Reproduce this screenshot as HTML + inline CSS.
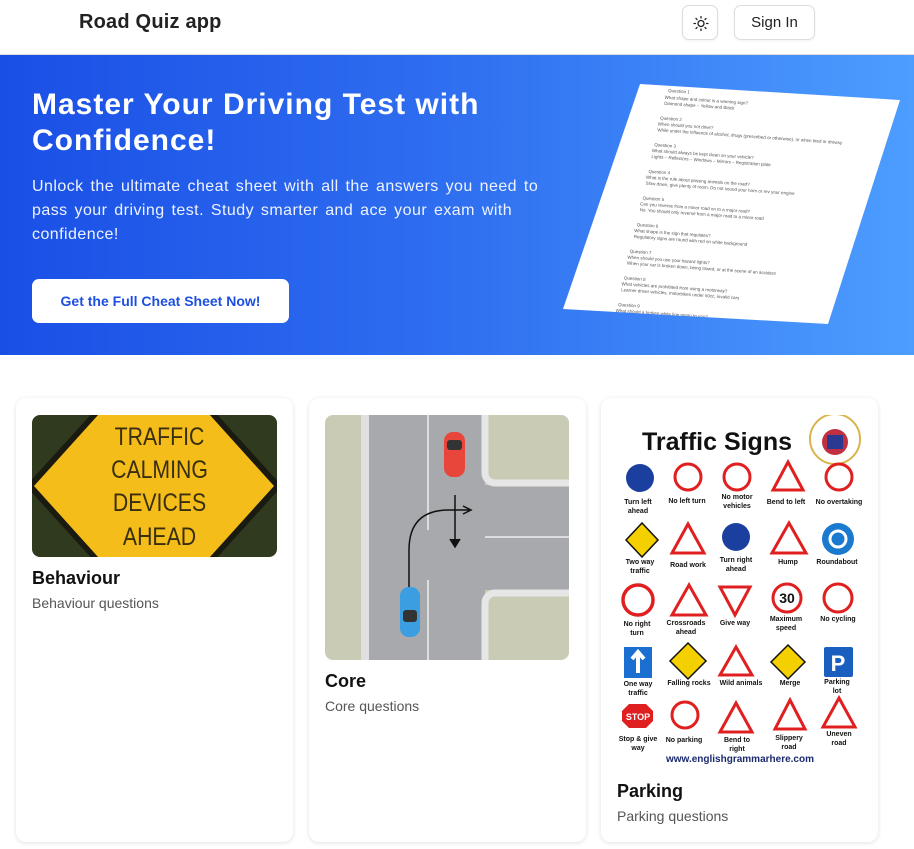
<!DOCTYPE html>
<html><head><meta charset="utf-8"><style>
*{margin:0;padding:0;box-sizing:border-box}
body{width:914px;height:849px;overflow:hidden;background:#fff;font-family:"Liberation Sans",sans-serif;position:relative}
.hdr{position:absolute;left:0;top:0;width:914px;height:55px;border-bottom:1px solid #ddd;background:#fff}
.logo{position:absolute;left:79px;top:11px;font-size:20px;font-weight:bold;color:#222;letter-spacing:0.2px}
.btn{position:absolute;border:1px solid #ddd;border-radius:7px;background:#fff;box-shadow:0 1px 2px rgba(0,0,0,.06)}
.hero{position:absolute;left:0;top:55px;width:914px;height:300px;background:linear-gradient(90deg,#1a4fe6 0%,#2f6ff0 50%,#4d9dff 100%)}
h1{position:absolute;left:32px;top:87px;color:#fff;font-size:30px;line-height:36px;font-weight:bold;letter-spacing:1px;white-space:nowrap}
.sub{position:absolute;left:32px;top:175px;white-space:nowrap;color:#eef3ff;font-size:16px;line-height:24px;letter-spacing:0.45px;word-spacing:2px}
.cta{position:absolute;left:32px;top:279px;width:257px;height:44px;background:#fff;border-radius:7px;color:#1d4fe0;font-weight:bold;font-size:14px;text-align:center;line-height:44px}
.card{position:absolute;top:398px;width:277px;height:444px;background:#fff;border-radius:10px;box-shadow:0 1px 5px rgba(0,0,0,.12)}
.t{position:absolute;font-size:18px;font-weight:bold;color:#111}
.s{position:absolute;font-size:14px;color:#555}
</style></head><body>
<div class="hdr">
<div class="logo">Road Quiz app</div>
<div class="btn" style="left:682px;top:5px;width:36px;height:35px">
<svg width="36" height="35" viewBox="0 0 36 35"><g stroke="#222" stroke-width="1.3" fill="none" stroke-linecap="round"><circle cx="18" cy="17.5" r="3"/><path d="M18 10.5v1.5M18 23v1.5M11 17.5h1.5M23.5 17.5h1.5M13 12.5l1 1M22 21.5l1 1M13 22.5l1-1M22 13.5l1-1"/></g></svg></div>
<div class="btn" style="left:734px;top:5px;width:81px;height:35px;font-size:15px;color:#222;text-align:center;line-height:33px">Sign In</div>
</div>
<div class="hero"></div>
<h1>Master Your Driving Test with<br>Confidence!</h1>
<div class="sub">Unlock the ultimate cheat sheet with all the answers you need to<br>pass your driving test. Study smarter and ace your exam with<br>confidence!</div>
<div class="cta">Get the Full Cheat Sheet Now!</div>
<svg style="position:absolute;left:0;top:0" width="914" height="360">
<defs><clipPath id="pc"><polygon points="640,84 900,100 828,324 563,309"/></clipPath></defs>
<polygon points="640,84 900,100 828,324 563,309" fill="#fff"/>
<g font-size="4.5" fill="#555" font-family="Liberation Sans" clip-path="url(#pc)">
<g transform="translate(668,92) rotate(4)">
<text x="0" y="0">Question 1</text><text x="-3" y="7">What shape and colour is a warning sign?</text><text x="-3" y="13">Diamond shape – Yellow and Black</text>
<text x="-6" y="28">Question 2</text><text x="-8" y="34">When should you not drive?</text><text x="-8" y="40">While under the influence of alcohol, drugs (prescribed or otherwise), or when tired or drowsy</text>
<text x="-10" y="55">Question 3</text><text x="-12" y="61">What should always be kept clean on your vehicle?</text><text x="-12" y="67">Lights – Reflectors – Windows – Mirrors – Registration plate</text>
<text x="-14" y="82">Question 4</text><text x="-16" y="88">What is the rule about passing animals on the road?</text><text x="-16" y="94">Slow down, give plenty of room. Do not sound your horn or rev your engine</text>
<text x="-18" y="109">Question 5</text><text x="-20" y="115">Can you reverse from a minor road on to a major road?</text><text x="-20" y="121">No. You should only reverse from a major road to a minor road</text>
<text x="-22" y="136">Question 6</text><text x="-24" y="142">What shape is the sign that regulates?</text><text x="-24" y="148">Regulatory signs are round with red on white background</text>
<text x="-27" y="163">Question 7</text><text x="-29" y="169">When should you use your hazard lights?</text><text x="-29" y="175">When your car is broken down, being towed, or at the scene of an accident</text>
<text x="-31" y="190">Question 8</text><text x="-33" y="196">What vehicles are prohibited from using a motorway?</text><text x="-33" y="202">Learner driver vehicles, motorbikes under 50cc, invalid cars</text>
<text x="-35" y="217">Question 9</text><text x="-37" y="223">What should a broken white line mean to you?</text><text x="-37" y="229">A broken white line divides the centre of the road</text>
</g></g></svg>

<div class="card" style="left:16px">
<svg style="position:absolute;left:16px;top:17px;border-radius:8px" width="245" height="142" viewBox="0 0 245 142">
<rect width="245" height="142" fill="#2f3a1e"/>
<polygon points="122,-70 250,71 122,212 -6,71" fill="#1a1a10"/>
<polygon points="122,-62 242,71 122,204 2,71" fill="#f5bd1a"/>
<g font-family="Liberation Sans" font-size="25" fill="#3a2e10" text-anchor="middle" transform="scale(0.85,1)">
<text x="150" y="30">TRAFFIC</text><text x="150" y="63">CALMING</text><text x="150" y="96">DEVICES</text><text x="150" y="130">AHEAD</text></g>
</svg>
<div class="t" style="left:16px;top:170px">Behaviour</div>
<div class="s" style="left:16px;top:197px">Behaviour questions</div>
</div>

<div class="card" style="left:309px">
<svg style="position:absolute;left:16px;top:17px;border-radius:8px" width="244" height="245" viewBox="0 0 244 245">
<rect width="244" height="245" fill="#c9cbb5"/>
<rect x="36" y="0" width="124" height="245" fill="#a7a9ac"/>
<rect x="160" y="70" width="84" height="105" fill="#a7a9ac"/>
<rect x="36" y="0" width="8" height="245" fill="#e0e0e0"/>
<rect x="160" y="0" width="84" height="70" fill="#c9cbb5"/>
<path d="M160 0v58a10 10 0 0 0 10 10h74" stroke="#e6e6e6" stroke-width="7" fill="none"/>
<path d="M160 245v-57a10 10 0 0 1 10-10h74" stroke="#e6e6e6" stroke-width="7" fill="none"/>
<line x1="103" y1="0" x2="103" y2="115" stroke="#eee" stroke-width="1.5"/><line x1="103" y1="165" x2="103" y2="245" stroke="#eee" stroke-width="1.5"/>
<line x1="160" y1="122" x2="244" y2="122" stroke="#eee" stroke-width="1.5"/>
<path d="M130 80v50M125 124l5 8 5-8" stroke="#111" stroke-width="1.5" fill="#111"/>
<path d="M84 175v-40q0-40 40-40h20M138 91l8 4-8 4" stroke="#111" stroke-width="1.5" fill="none"/>
<rect x="119" y="17" width="21" height="45" rx="9" fill="#e8463a"/><rect x="122" y="25" width="15" height="10" rx="3" fill="#333"/>
<rect x="75" y="172" width="20" height="50" rx="9" fill="#3a9ee0"/><rect x="78" y="195" width="14" height="12" rx="3" fill="#333"/>
</svg>
<div class="t" style="left:16px;top:273px">Core</div>
<div class="s" style="left:16px;top:300px">Core questions</div>
</div>

<div class="card" style="left:601px">
<svg style="position:absolute;left:16px;top:17px" width="245" height="355" viewBox="0 0 245 355" font-family="Liberation Sans">
<text x="100" y="35" font-size="25" font-weight="bold" text-anchor="middle" fill="#111">Traffic Signs</text>
<circle cx="218" cy="24" r="25" fill="#fff" stroke="#d9b44a" stroke-width="2"/><circle cx="218" cy="27" r="13" fill="#c03040"/><rect x="210" y="20" width="16" height="14" fill="#2a3a90"/>
<g font-size="7" font-weight="bold" fill="#111" text-anchor="middle">
<circle cx="23" cy="63" r="14" fill="#1a3f9e"/><text x="21" y="89">Turn left</text><text x="21" y="98">ahead</text>
<circle cx="71" cy="62" r="13" fill="#fff" stroke="#e02020" stroke-width="3"/><text x="70" y="88">No left turn</text>
<circle cx="120" cy="62" r="13" fill="#fff" stroke="#e02020" stroke-width="3"/><text x="120" y="84">No motor</text><text x="120" y="93">vehicles</text>
<polygon points="171,47 186,75 156,75" fill="#fff" stroke="#e02020" stroke-width="3"/><text x="169" y="89">Bend to left</text>
<circle cx="222" cy="62" r="13" fill="#fff" stroke="#e02020" stroke-width="3"/><text x="222" y="89">No overtaking</text>
<polygon points="25,108 41,125 25,142 9,125" fill="#f5d000" stroke="#111" stroke-width="1.5"/><text x="23" y="149">Two way</text><text x="23" y="158">traffic</text>
<polygon points="71,109 87,138 55,138" fill="#fff" stroke="#e02020" stroke-width="3"/><text x="71" y="152">Road work</text>
<circle cx="119" cy="122" r="14" fill="#1a3f9e"/><text x="119" y="147">Turn right</text><text x="119" y="156">ahead</text>
<polygon points="172,108 189,138 155,138" fill="#fff" stroke="#e02020" stroke-width="3"/><text x="171" y="149">Hump</text>
<circle cx="221" cy="124" r="16" fill="#1a7ad0"/><circle cx="221" cy="124" r="8" fill="none" stroke="#fff" stroke-width="3"/><text x="220" y="149">Roundabout</text>
<circle cx="21" cy="185" r="15" fill="#fff" stroke="#e02020" stroke-width="3.5"/><text x="20" y="211">No right</text><text x="20" y="220">turn</text>
<polygon points="72,170 89,200 55,200" fill="#fff" stroke="#e02020" stroke-width="3"/><text x="69" y="210">Crossroads</text><text x="69" y="219">ahead</text>
<polygon points="103,172 133,172 118,200" fill="#fff" stroke="#e02020" stroke-width="3"/><text x="118" y="210">Give way</text>
<circle cx="170" cy="183" r="14" fill="#fff" stroke="#e02020" stroke-width="3"/><text x="170" y="188" font-size="14">30</text><text x="169" y="206">Maximum</text><text x="169" y="215">speed</text>
<circle cx="221" cy="183" r="14" fill="#fff" stroke="#e02020" stroke-width="3"/><text x="221" y="206">No cycling</text>
<rect x="7" y="232" width="28" height="31" fill="#1a6fd0"/><path d="M21 258v-20M15 244l6-7 6 7" stroke="#fff" stroke-width="4" fill="none"/><text x="21" y="271">One way</text><text x="21" y="280">traffic</text>
<polygon points="71,228 89,246 71,264 53,246" fill="#f5d000" stroke="#111" stroke-width="1.5"/><text x="72" y="270">Falling rocks</text>
<polygon points="119,232 135,260 103,260" fill="#fff" stroke="#e02020" stroke-width="3"/><text x="124" y="270">Wild animals</text>
<polygon points="171,230 188,247 171,264 154,247" fill="#f5d000" stroke="#111" stroke-width="1.5"/><text x="173" y="270">Merge</text>
<rect x="207" y="232" width="29" height="30" rx="2" fill="#1a5fc0"/><text x="221" y="256" font-size="22" fill="#fff">P</text><text x="220" y="269">Parking</text><text x="220" y="278">lot</text>
<polygon points="12,289 29,289 36,296 36,306 29,313 12,313 5,306 5,296" fill="#e02020"/><text x="21" y="305" fill="#fff" font-size="9">STOP</text><text x="21" y="326">Stop &amp; give</text><text x="21" y="335">way</text>
<circle cx="68" cy="300" r="13" fill="#fff" stroke="#e02020" stroke-width="3"/><text x="67" y="327">No parking</text>
<polygon points="119,288 135,317 103,317" fill="#fff" stroke="#e02020" stroke-width="3"/><text x="120" y="327">Bend to</text><text x="120" y="336">right</text>
<polygon points="173,285 188,314 158,314" fill="#fff" stroke="#e02020" stroke-width="3"/><text x="172" y="325">Slippery</text><text x="172" y="334">road</text>
<polygon points="222,283 238,312 206,312" fill="#fff" stroke="#e02020" stroke-width="3"/><text x="222" y="321">Uneven</text><text x="222" y="330">road</text>
<text x="123" y="347" font-size="10" fill="#1a2a6e">www.englishgrammarhere.com</text>
</g></svg>
<div class="t" style="left:16px;top:383px">Parking</div>
<div class="s" style="left:16px;top:410px">Parking questions</div>
</div>
</body></html>
